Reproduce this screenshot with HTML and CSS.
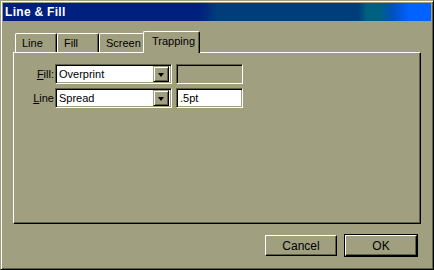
FILE: index.html
```html
<!DOCTYPE html>
<html>
<head>
<meta charset="utf-8">
<link rel="stylesheet" href="styles.css">
</head>
<body>
<div class="window">
  <div class="titlebar"><span class="title">Line &amp; Fill</span></div>
  <div class="content">
    <div class="tabs">
      <div class="tab tab-line">Line</div>
      <div class="tab tab-fill">Fill</div>
      <div class="tab tab-screen">Screen</div>
      <div class="tab tab-trap active">Trapping</div>
    </div>
    <div class="panel">
      <div class="row">
        <label class="lbl"><u>F</u>ill:</label>
        <div class="combo"><span class="combo-text">Overprint</span><span class="drop"><span class="arrow"></span></span></div>
        <div class="field disabled"></div>
      </div>
      <div class="row">
        <label class="lbl"><u>L</u>ine</label>
        <div class="combo"><span class="combo-text">Spread</span><span class="drop"><span class="arrow"></span></span></div>
        <div class="field">.5pt</div>
      </div>
    </div>
    <div class="buttons">
      <div class="btn">Cancel</div>
      <div class="btn default">OK</div>
    </div>
  </div>
</div>
</body>
</html>
```
FILE: styles.css
```css
html, body {
  margin: 0;
  padding: 0;
  background: #a0a080;
}
body {
  font-family: "Liberation Sans", Arial, sans-serif;
  font-size: 11px;
  color: #000;
}
.window {
  width: 434px;
  height: 270px;
  box-sizing: border-box;
  background: #a0a080;
  border: 1px solid;
  border-color: #a0a080 #000 #000 #a0a080;
  box-shadow: inset 1px 1px 0 #fff, inset -1px -1px 0 #606040;
  padding: 2px;
  display: flex;
  flex-direction: column;
}
.titlebar {
  height: 18px;
  flex: none;
  background: linear-gradient(to right, #00207f 0%, #00207f 46%, #003d7a 50%, #003d7a 83%, #006080 85%, #006080 88%, #0050c0 91%, #0062ff 95%, #0062ff 100%);
  display: flex;
  align-items: center;
  padding-left: 2px;
}
.title {
  color: #fff;
  font-weight: bold;
  font-size: 12px;
  letter-spacing: 0.3px;
}
.content {
  flex: 1;
  padding: 10px 10px 0 10px;
  display: flex;
  flex-direction: column;
}
.tabs {
  display: flex;
  align-items: flex-end;
  height: 21px;
  padding-left: 2px;
  position: relative;
  z-index: 1;
}
.tab {
  box-sizing: border-box;
  height: 19px;
  border-top: 1px solid #fff;
  border-left: 1px solid #fff;
  border-right: 1px solid #000;
  box-shadow: inset -1px 0 0 #606040;
  border-radius: 2px 2px 0 0;
  padding: 3px 0 0 6px;
  background: #a0a080;
}
.tab-line { width: 42px; }
.tab-fill { width: 42px; }
.tab-screen { width: 46px; }
.tab.active {
  height: 22px;
  margin-left: -2px;
  margin-bottom: -1px;
  width: 57px;
  padding: 3px 0 0 8px;
}
.panel {
  box-sizing: border-box;
  height: 172px;
  border-top: 1px solid #fff;
  border-left: 1px solid #fff;
  border-right: 1px solid #000;
  border-bottom: 1px solid #000;
  box-shadow: inset -1px -1px 0 #606040;
  padding-top: 11px;
  display: flex;
  flex-direction: column;
  gap: 4px;
}
.row {
  display: flex;
  align-items: center;
  height: 20px;
}
.lbl {
  width: 40px;
  text-align: right;
  margin-right: 1px;
}
.combo {
  box-sizing: border-box;
  width: 117px;
  height: 20px;
  border: 1px solid;
  border-color: #606040 #fff #fff #606040;
  box-shadow: inset 1px 1px 0 #000, inset -1px -1px 0 #a0a080;
  background: #fff;
  display: flex;
  align-items: center;
  padding: 2px;
}
.combo-text {
  flex: 1;
  padding-left: 1px;
}
.drop {
  box-sizing: border-box;
  width: 16px;
  height: 16px;
  background: #a0a080;
  border: 1px solid;
  border-color: #a0a080 #000 #000 #a0a080;
  box-shadow: inset 1px 1px 0 #fff, inset -1px -1px 0 #606040;
  display: flex;
  align-items: center;
  justify-content: center;
}
.arrow {
  width: 0;
  height: 0;
  border-left: 3px solid transparent;
  border-right: 3px solid transparent;
  border-top: 4px solid #000;
  margin-top: 1px;
}
.field {
  box-sizing: border-box;
  width: 67px;
  height: 20px;
  margin-left: 4px;
  border: 1px solid;
  border-color: #606040 #fff #fff #606040;
  box-shadow: inset 1px 1px 0 #000, inset -1px -1px 0 #a0a080;
  background: #fff;
  padding: 3px 0 0 3px;
}
.field.disabled {
  background: #a0a080;
}
.buttons {
  display: flex;
  justify-content: flex-end;
  gap: 8px;
  margin-top: 11px;
  padding-right: 4px;
}
.btn {
  box-sizing: border-box;
  width: 72px;
  height: 21px;
  border: 1px solid;
  border-color: #fff #000 #000 #fff;
  box-shadow: inset -1px -1px 0 #606040;
  display: flex;
  align-items: center;
  justify-content: center;
  font-size: 12px;
}
.btn.default {
  outline: 1px solid #000;
}
```
